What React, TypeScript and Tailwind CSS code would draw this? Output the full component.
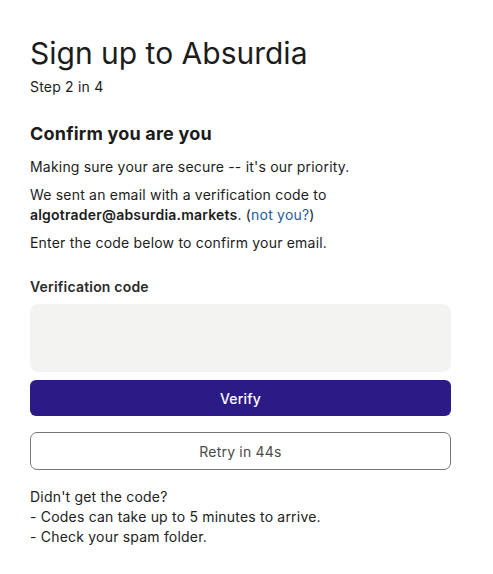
import React from "react";

const font = { fontFamily: "Inter, 'Noto Sans', sans-serif" };

export default function App() {
  return (
    <div
      className="min-h-screen bg-white text-[#1c1c1c] px-[30px] pt-[34px]"
      style={font}
    >
      <div className="w-[421px] flex flex-col">
        <h1 className="text-[30px] leading-[38px] font-normal">
          Sign up to Absurdia
        </h1>
        <div className="text-[14px] leading-[20px] mt-[5px] tracking-[0.2px]">Step 2 in 4</div>

        <h2 className="text-[18px] leading-[24px] font-bold mt-[25px] tracking-[0.2px]">
          Confirm you are you
        </h2>
        <div className="flex flex-col text-[14px] leading-[20px] tracking-[0.2px]">
          <p className="mt-[11px]">
            Making sure your are secure -- it's our priority.
          </p>
          <p className="mt-[8px]">
            We sent an email with a verification code to{" "}
            <span className="font-semibold">algotrader@absurdia.markets</span>. (
            <a className="text-[#1d5c9c]" href="#">
              not you?
            </a>
            )
          </p>
          <p className="mt-[8px]">Enter the code below to confirm your email.</p>
        </div>

        <label className="text-[14px] leading-[20px] font-semibold text-[#2b2b2b] mt-[24px] tracking-[0.2px]">
          Verification code
        </label>
        <input
          className="mt-[7px] h-[68px] rounded-[8px] bg-[#f3f3f2] outline-none px-3"
          type="text"
        />
        <button className="mt-[8px] h-[36px] rounded-[6px] bg-[#2c1a87] text-white text-[14px] font-medium tracking-[0.2px]">
          Verify
        </button>
        <button className="mt-[16px] h-[38px] rounded-[7px] border border-[#777] bg-white text-[#4a4a4a] text-[14px] tracking-[0.2px]">
          Retry in 44s
        </button>

        <div className="mt-[17px] text-[14px] leading-[20px] text-[#222] tracking-[0.2px]">
          <div>Didn't get the code?</div>
          <div>- Codes can take up to 5 minutes to arrive.</div>
          <div>- Check your spam folder.</div>
        </div>
      </div>
    </div>
  );
}
